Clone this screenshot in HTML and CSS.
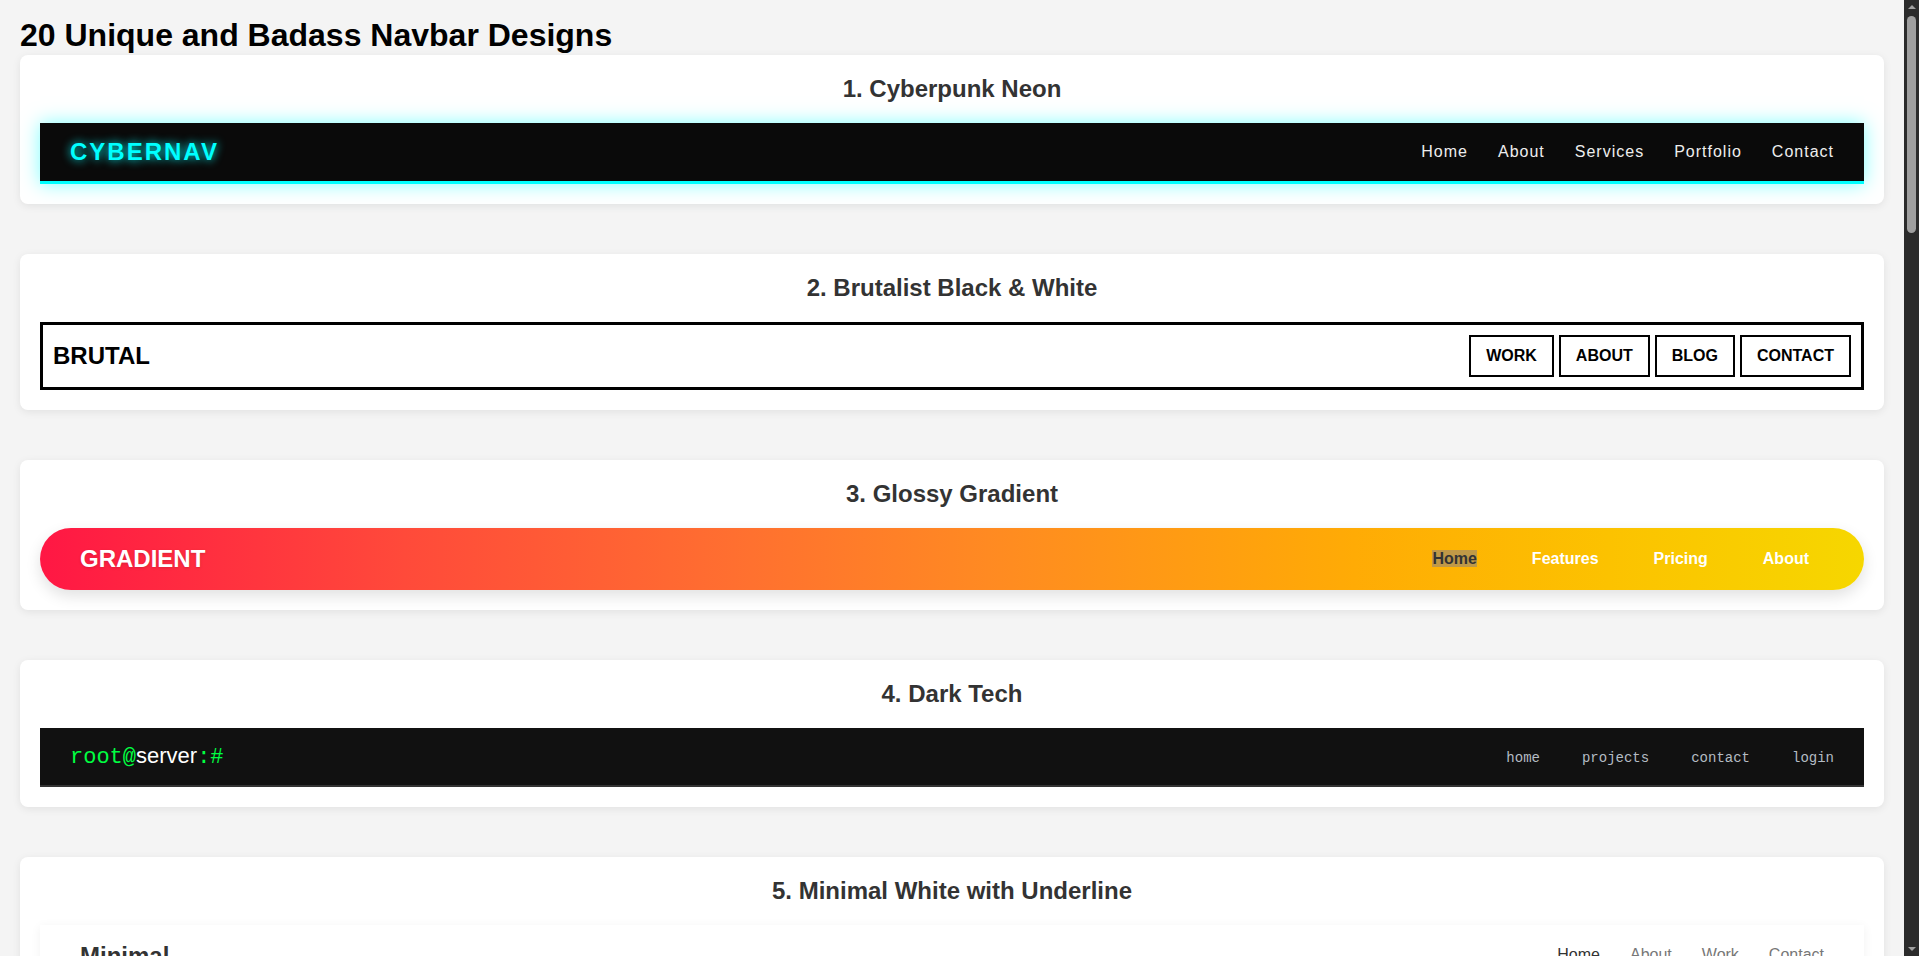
FILE: index.html
```html
<!DOCTYPE html>
<html lang="en">
<head>
<meta charset="UTF-8">
<title>20 Unique and Badass Navbar Designs</title>
<link rel="stylesheet" href="styles.css">
</head>
<body>
<h1 class="page-title">20 Unique and Badass Navbar Designs</h1>

<section class="card">
  <h2 class="card-title">1. Cyberpunk Neon</h2>
  <nav class="nav nav-cyber">
    <div class="logo">CYBERNAV</div>
    <ul class="links">
      <li><a href="#">Home</a></li>
      <li><a href="#">About</a></li>
      <li><a href="#">Services</a></li>
      <li><a href="#">Portfolio</a></li>
      <li><a href="#">Contact</a></li>
    </ul>
  </nav>
</section>

<section class="card">
  <h2 class="card-title">2. Brutalist Black &amp; White</h2>
  <nav class="nav nav-brutal">
    <div class="logo">BRUTAL</div>
    <ul class="links">
      <li><a href="#">WORK</a></li>
      <li><a href="#">ABOUT</a></li>
      <li><a href="#">BLOG</a></li>
      <li><a href="#">CONTACT</a></li>
    </ul>
  </nav>
</section>

<section class="card">
  <h2 class="card-title">3. Glossy Gradient</h2>
  <nav class="nav nav-gradient">
    <div class="logo">GRADIENT</div>
    <ul class="links">
      <li><a href="#" class="active">Home</a></li>
      <li><a href="#">Features</a></li>
      <li><a href="#">Pricing</a></li>
      <li><a href="#">About</a></li>
    </ul>
  </nav>
</section>

<section class="card">
  <h2 class="card-title">4. Dark Tech</h2>
  <nav class="nav nav-tech">
    <div class="logo"><span class="mono">root@</span><span class="host">server</span><span class="mono">:#</span></div>
    <ul class="links">
      <li><a href="#">home</a></li>
      <li><a href="#">projects</a></li>
      <li><a href="#">contact</a></li>
      <li><a href="#">login</a></li>
    </ul>
  </nav>
</section>

<section class="card">
  <h2 class="card-title">5. Minimal White with Underline</h2>
  <nav class="nav nav-minimal">
    <div class="logo">Minimal</div>
    <ul class="links">
      <li><a href="#" class="active">Home</a></li>
      <li><a href="#">About</a></li>
      <li><a href="#">Work</a></li>
      <li><a href="#">Contact</a></li>
    </ul>
  </nav>
</section>

<section class="card">
  <h2 class="card-title">6. Glassmorphism</h2>
  <nav class="nav nav-glass">
    <div class="logo">Glass</div>
    <ul class="links"><li><a href="#">Home</a></li><li><a href="#">Explore</a></li><li><a href="#">Gallery</a></li><li><a href="#">Contact</a></li></ul>
  </nav>
</section>

<section class="card">
  <h2 class="card-title">7. Retro Synthwave</h2>
  <nav class="nav nav-synth">
    <div class="logo">SYNTH&#8217;84</div>
    <ul class="links"><li><a href="#">Tracks</a></li><li><a href="#">Albums</a></li><li><a href="#">Tour</a></li><li><a href="#">Shop</a></li></ul>
  </nav>
</section>

<section class="card">
  <h2 class="card-title">8. Neumorphism</h2>
  <nav class="nav nav-neu">
    <div class="logo">Soft UI</div>
    <ul class="links"><li><a href="#">Home</a></li><li><a href="#">About</a></li><li><a href="#">Services</a></li><li><a href="#">Contact</a></li></ul>
  </nav>
</section>

<section class="card">
  <h2 class="card-title">9. Floating Pill</h2>
  <nav class="nav nav-pill">
    <div class="logo">Pill</div>
    <ul class="links"><li><a href="#" class="active">Home</a></li><li><a href="#">Blog</a></li><li><a href="#">Docs</a></li><li><a href="#">Support</a></li></ul>
  </nav>
</section>

<section class="card">
  <h2 class="card-title">10. Split Color</h2>
  <nav class="nav nav-split">
    <div class="logo">SPLIT</div>
    <ul class="links"><li><a href="#">Home</a></li><li><a href="#">Studio</a></li><li><a href="#">Projects</a></li><li><a href="#">Contact</a></li></ul>
  </nav>
</section>

<section class="card">
  <h2 class="card-title">11. Vaporwave</h2>
  <nav class="nav nav-vapor">
    <div class="logo">VAPOR</div>
    <ul class="links"><li><a href="#">Aesthetic</a></li><li><a href="#">Music</a></li><li><a href="#">Art</a></li><li><a href="#">Mall</a></li></ul>
  </nav>
</section>

<section class="card">
  <h2 class="card-title">12. Material Blue</h2>
  <nav class="nav nav-material">
    <div class="logo">Material</div>
    <ul class="links"><li><a href="#">Home</a></li><li><a href="#">Components</a></li><li><a href="#">Guides</a></li><li><a href="#">About</a></li></ul>
  </nav>
</section>

<section class="card">
  <h2 class="card-title">13. Hand-drawn Sketch</h2>
  <nav class="nav nav-sketch">
    <div class="logo">Sketchy</div>
    <ul class="links"><li><a href="#">Doodles</a></li><li><a href="#">Notes</a></li><li><a href="#">About</a></li><li><a href="#">Say hi</a></li></ul>
  </nav>
</section>

<section class="card">
  <h2 class="card-title">14. Newspaper Classic</h2>
  <nav class="nav nav-paper">
    <div class="logo">The Daily Nav</div>
    <ul class="links"><li><a href="#">World</a></li><li><a href="#">Politics</a></li><li><a href="#">Business</a></li><li><a href="#">Opinion</a></li></ul>
  </nav>
</section>

<section class="card">
  <h2 class="card-title">15. Neon Outline</h2>
  <nav class="nav nav-outline">
    <div class="logo">OUTLINE</div>
    <ul class="links"><li><a href="#">Home</a></li><li><a href="#">Menu</a></li><li><a href="#">Events</a></li><li><a href="#">Book</a></li></ul>
  </nav>
</section>

<section class="card">
  <h2 class="card-title">16. Tabbed Folder</h2>
  <nav class="nav nav-tabs">
    <div class="logo">Tabs</div>
    <ul class="links"><li><a href="#" class="active">Overview</a></li><li><a href="#">Files</a></li><li><a href="#">Settings</a></li><li><a href="#">Share</a></li></ul>
  </nav>
</section>

<section class="card">
  <h2 class="card-title">17. Gaming HUD</h2>
  <nav class="nav nav-hud">
    <div class="logo">HUD//01</div>
    <ul class="links"><li><a href="#">Play</a></li><li><a href="#">Loadout</a></li><li><a href="#">Ranks</a></li><li><a href="#">Quit</a></li></ul>
  </nav>
</section>

<section class="card">
  <h2 class="card-title">18. Pastel Soft</h2>
  <nav class="nav nav-pastel">
    <div class="logo">pastel</div>
    <ul class="links"><li><a href="#">home</a></li><li><a href="#">shop</a></li><li><a href="#">journal</a></li><li><a href="#">contact</a></li></ul>
  </nav>
</section>

<section class="card">
  <h2 class="card-title">19. Corporate Clean</h2>
  <nav class="nav nav-corp">
    <div class="logo">Acme Corp</div>
    <ul class="links"><li><a href="#">Solutions</a></li><li><a href="#">Industries</a></li><li><a href="#">Careers</a></li><li><a href="#" class="cta">Get Started</a></li></ul>
  </nav>
</section>

<section class="card">
  <h2 class="card-title">20. Dark Mode Pro</h2>
  <nav class="nav nav-darkpro">
    <div class="logo">PRO</div>
    <ul class="links"><li><a href="#">Dashboard</a></li><li><a href="#">Analytics</a></li><li><a href="#">Billing</a></li><li><a href="#">Account</a></li></ul>
  </nav>
</section>

<div class="scrollbar" aria-hidden="true">
  <div class="sb-arrow sb-up"></div>
  <div class="sb-track"><div class="sb-thumb"></div></div>
  <div class="sb-arrow sb-down"></div>
</div>
</body>
</html>
```

FILE: styles.css
```css
* { box-sizing: border-box; }

body {
  margin: 0;
  padding: 17px 35px 20px 20px;
  background: #f4f4f4;
  font-family: "Liberation Sans", Arial, sans-serif;
}

.page-title {
  margin: 0 0 1px;
  font-size: 32px;
  font-weight: bold;
  color: #000;
}

.card {
  background: #fff;
  border-radius: 8px;
  box-shadow: 0 2px 8px rgba(0, 0, 0, 0.08);
  padding: 20px;
  margin-bottom: 50px;
}

.card-title {
  margin: 0 0 20px;
  font-size: 24px;
  font-weight: bold;
  color: #333;
  text-align: center;
}

.nav {
  display: flex;
  justify-content: space-between;
  align-items: center;
}

.links {
  display: flex;
  list-style: none;
  margin: 0;
  padding: 0;
}

.links a { text-decoration: none; }

.logo { font-size: 24px; font-weight: bold; }

/* fake browser scrollbar (overlay) */
.scrollbar {
  position: fixed;
  top: 0;
  right: 0;
  width: 15px;
  height: 100vh;
  background: #2b2b2b;
  display: flex;
  flex-direction: column;
  align-items: center;
}
.sb-arrow {
  width: 0;
  height: 0;
  border-left: 4px solid transparent;
  border-right: 4px solid transparent;
  margin: 5px 0;
}
.sb-up { border-bottom: 4px solid #a0a0a0; }
.sb-down { border-top: 4px solid #a0a0a0; }
.sb-track {
  flex: 1;
  width: 100%;
  display: flex;
  justify-content: center;
  padding-top: 2px;
}
.sb-thumb {
  width: 9px;
  height: 217px;
  border-radius: 5px;
  background: #9f9f9f;
}

/* 1. Cyberpunk */
.nav-cyber {
  background: #0a0a0a;
  padding: 15px 30px;
  border-bottom: 3px solid #0ff;
  box-shadow: 0 0 18px rgba(0, 255, 255, 0.5);
}
.nav-cyber .logo {
  color: #0ff;
  letter-spacing: 2px;
  text-shadow: 0 0 10px #0ff;
}
.nav-cyber .links { gap: 30px; }
.nav-cyber .links a {
  color: #eee;
  font-size: 16px;
  letter-spacing: 1px;
}

/* 2. Brutal */
.nav-brutal {
  background: #fff;
  border: 3px solid #000;
  padding: 10px;
}
.nav-brutal .logo { color: #000; }
.nav-brutal .links { gap: 5px; }
.nav-brutal .links a {
  display: block;
  border: 2px solid #000;
  padding: 10px 15px;
  color: #000;
  font-size: 16px;
  font-weight: bold;
}

/* 3. Gradient */
.nav-gradient {
  padding: 17px 55px 17px 40px;
  border-radius: 50px;
  background: linear-gradient(90deg, #ff1744 0%, #ff4a3a 20%, #ff6f30 38%, #ff8a22 52%, #ffab05 72%, #fcc200 86%, #f6d700 100%);
  box-shadow: 0 6px 15px rgba(0, 0, 0, 0.12);
}
.nav-gradient .logo {
  color: #fff;
  text-shadow: 0 1px 3px rgba(0, 0, 0, 0.15);
}
.nav-gradient .links { gap: 55px; }
.nav-gradient .links a {
  color: #fff;
  font-size: 16px;
  font-weight: bold;
}
.nav-gradient .links a.active {
  color: #333;
  background: rgba(130, 125, 140, 0.5);
}

/* 4. Dark Tech */
.nav-tech {
  background: #111;
  padding: 15px 30px;
  border-bottom: 2px solid #333;
}
.nav-tech .logo {
  font-size: 22px;
  font-weight: normal;
  color: #fff;
}
.nav-tech .mono {
  font-family: "Liberation Mono", monospace;
  color: #00ff41;
}
.nav-tech .links { gap: 42px; }
.nav-tech .links a {
  font-family: "Liberation Mono", monospace;
  font-size: 14px;
  color: #b4bcc4;
}

/* 5. Minimal */
.nav-minimal {
  background: #fff;
  padding: 17px 40px;
  box-shadow: 0 2px 10px rgba(0, 0, 0, 0.06);
}
.nav-minimal .logo { color: #333; }
.nav-minimal .links { gap: 30px; }
.nav-minimal .links a {
  display: block;
  padding: 4px 0;
  color: #777;
  font-size: 16px;
  border-bottom: 2px solid transparent;
}
.nav-minimal .links a.active { color: #333; border-bottom-color: #333; }

/* 6+ */
.nav-glass {
  padding: 18px 40px;
  border-radius: 14px;
  background: linear-gradient(135deg, #8ec5fc, #e0c3fc);
}
.nav-glass .logo { color: #fff; }
.nav-glass .links { gap: 30px; }
.nav-glass .links a { color: #fff; font-size: 16px; }

.nav-synth {
  padding: 18px 40px;
  background: linear-gradient(180deg, #2b1055, #7597de);
  border-bottom: 3px solid #ff2bd6;
}
.nav-synth .logo { color: #ff2bd6; font-style: italic; }
.nav-synth .links { gap: 30px; }
.nav-synth .links a { color: #fffb96; font-size: 16px; }

.nav-neu {
  padding: 18px 40px;
  border-radius: 20px;
  background: #e0e5ec;
  box-shadow: 6px 6px 12px #b8bec7, -6px -6px 12px #fff;
}
.nav-neu .logo { color: #555; }
.nav-neu .links { gap: 30px; }
.nav-neu .links a { color: #666; font-size: 16px; }

.nav-pill {
  padding: 12px 12px 12px 30px;
  border-radius: 40px;
  background: #222;
}
.nav-pill .logo { color: #fff; }
.nav-pill .links { gap: 8px; }
.nav-pill .links a { display: block; padding: 10px 20px; border-radius: 30px; color: #ccc; font-size: 16px; }
.nav-pill .links a.active { background: #fff; color: #222; }

.nav-split {
  padding: 18px 40px;
  background: linear-gradient(90deg, #1e3a8a 30%, #fbbf24 30%);
}
.nav-split .logo { color: #fbbf24; }
.nav-split .links { gap: 30px; }
.nav-split .links a { color: #1e3a8a; font-size: 16px; font-weight: bold; }

.nav-vapor {
  padding: 18px 40px;
  background: linear-gradient(90deg, #ff71ce, #01cdfe, #05ffa1);
}
.nav-vapor .logo { color: #fff; letter-spacing: 6px; }
.nav-vapor .links { gap: 30px; }
.nav-vapor .links a { color: #fff; font-size: 16px; }

.nav-material {
  padding: 18px 40px;
  background: #1976d2;
  box-shadow: 0 3px 6px rgba(0, 0, 0, 0.2);
}
.nav-material .logo { color: #fff; }
.nav-material .links { gap: 30px; }
.nav-material .links a { color: #fff; font-size: 15px; text-transform: uppercase; }

.nav-sketch {
  padding: 16px 40px;
  border: 2px dashed #333;
  border-radius: 12px 4px 14px 6px;
}
.nav-sketch .logo { color: #333; font-family: "DejaVu Serif", serif; }
.nav-sketch .links { gap: 30px; }
.nav-sketch .links a { color: #333; font-size: 16px; }

.nav-paper {
  padding: 16px 40px;
  border-top: 3px double #000;
  border-bottom: 3px double #000;
  background: #fbf8f0;
}
.nav-paper .logo { color: #000; font-family: "Liberation Serif", serif; }
.nav-paper .links { gap: 30px; }
.nav-paper .links a { color: #222; font-size: 16px; font-family: "Liberation Serif", serif; }

.nav-outline {
  padding: 16px 40px;
  background: #000;
  border: 2px solid #39ff14;
}
.nav-outline .logo { color: #39ff14; }
.nav-outline .links { gap: 30px; }
.nav-outline .links a { color: #39ff14; font-size: 16px; }

.nav-tabs {
  padding: 14px 40px 0;
  background: #eef1f5;
  align-items: flex-end;
}
.nav-tabs .logo { color: #333; padding-bottom: 14px; }
.nav-tabs .links { gap: 4px; }
.nav-tabs .links a { display: block; padding: 14px 22px; border-radius: 8px 8px 0 0; background: #d7dde6; color: #444; font-size: 16px; }
.nav-tabs .links a.active { background: #fff; }

.nav-hud {
  padding: 18px 40px;
  background: #0d1b2a;
  border-left: 6px solid #ff6b00;
}
.nav-hud .logo { color: #ff6b00; }
.nav-hud .links { gap: 30px; }
.nav-hud .links a { color: #cfe3ff; font-size: 16px; text-transform: uppercase; }

.nav-pastel {
  padding: 18px 40px;
  border-radius: 16px;
  background: #ffd6e0;
}
.nav-pastel .logo { color: #9b5de5; }
.nav-pastel .links { gap: 30px; }
.nav-pastel .links a { color: #6a4c93; font-size: 16px; }

.nav-corp {
  padding: 12px 40px;
  background: #fff;
  border-bottom: 1px solid #ddd;
}
.nav-corp .logo { color: #0a3d62; }
.nav-corp .links { gap: 30px; align-items: center; }
.nav-corp .links a { color: #333; font-size: 16px; }
.nav-corp .links a.cta { display: block; padding: 10px 18px; border-radius: 4px; background: #0a3d62; color: #fff; }

.nav-darkpro {
  padding: 18px 40px;
  background: #1a1a2e;
}
.nav-darkpro .logo { color: #e94560; }
.nav-darkpro .links { gap: 30px; }
.nav-darkpro .links a { color: #ddd; font-size: 16px; }
```
